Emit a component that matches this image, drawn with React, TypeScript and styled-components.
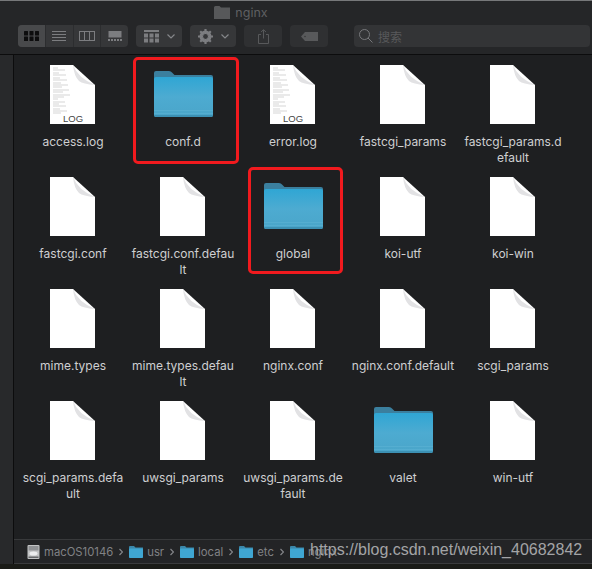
import React from "react";
import styled, { createGlobalStyle } from "styled-components";

const GlobalStyle = createGlobalStyle`
  html, body {
    margin: 0;
    padding: 0;
    background: #1e1f21;
  }
`;

type FileKind = "log" | "doc" | "folder";

const files: { name: string; kind: FileKind; mark?: "wide" | "narrow" }[] = [
  { name: "access.log", kind: "log" },
  { name: "conf.d", kind: "folder", mark: "wide" },
  { name: "error.log", kind: "log" },
  { name: "fastcgi_params", kind: "doc" },
  { name: "fastcgi_params.default", kind: "doc" },
  { name: "fastcgi.conf", kind: "doc" },
  { name: "fastcgi.conf.default", kind: "doc" },
  { name: "global", kind: "folder", mark: "narrow" },
  { name: "koi-utf", kind: "doc" },
  { name: "koi-win", kind: "doc" },
  { name: "mime.types", kind: "doc" },
  { name: "mime.types.default", kind: "doc" },
  { name: "nginx.conf", kind: "doc" },
  { name: "nginx.conf.default", kind: "doc" },
  { name: "scgi_params", kind: "doc" },
  { name: "scgi_params.default", kind: "doc" },
  { name: "uwsgi_params", kind: "doc" },
  { name: "uwsgi_params.default", kind: "doc" },
  { name: "valet", kind: "folder" },
  { name: "win-utf", kind: "doc" },
];

const FolderIcon = ({ id }: { id: string }) => (
  <svg width="60" height="48" viewBox="0 0 60 48">
    <defs>
      <linearGradient id={id} x1="0" y1="0" x2="0" y2="1">
        <stop offset="0" stopColor="#2fa6d4" />
        <stop offset="0.5" stopColor="#4dabd1" />
        <stop offset="1" stopColor="#4aa5c9" />
      </linearGradient>
    </defs>
    <path d="M1 3 Q1 1 3 1 H16 Q18 1 19 2.500 L21.500 5 H58 Q60 5 60 7 V14 H1 Z" fill="#3b7f9e" />
    <path d="M1 9 Q1 7 3 7 H58 Q60 7 60 9 V45 Q60 47 58 47 H3 Q1 47 1 45 Z" fill={`url(#${id})`} />
    <path d="M1 40 H60 V41 H1 Z M1 43 H60 V44 H1 Z" fill="#5cb2d3" opacity="0.6" />
    <path d="M1 45 Q1 47 3 47 H58 Q60 47 60 45 Z" fill="#3c90b3" />
  </svg>
);

const DocIcon = ({ log }: { log?: boolean }) => (
  <svg width="46" height="59" viewBox="0 0 46 59">
    <path d="M0 0 H23 L45 20 V59 H0 Z" fill="#ffffff" />
    <path d="M23 0 Q28 13 45 20 Q33 19 29 16 Q24 11 23 0 Z" fill="#e2e2e4" />
    {log && (
      <g stroke="#a9a9a9" strokeWidth="0.5">
        {[3, 5, 8, 10, 13, 15, 18, 20, 22, 25, 27, 30, 32, 34, 37, 39, 41, 44, 46, 48].map((y, i) => (
          <line key={y} x1="3" x2={8 + ((i * 7) % 13)} y1={y} y2={y} />
        ))}
      </g>
    )}
    {log && (
      <text x="13" y="57" fontFamily="Liberation Sans, sans-serif" fontSize="9.500" fill="#444">
        LOG
      </text>
    )}
  </svg>
);

const SmallFolder = () => (
  <svg width="14" height="12" viewBox="0 0 14 12">
    <path d="M0 1 Q0 0 1 0 H5 L6.500 1.500 H14 V4 H0 Z" fill="#3a87aa" />
    <rect x="0" y="2.500" width="14" height="9.500" rx="0.800" fill="#3fa6d2" />
  </svg>
);

const Chevron = () => (
  <svg width="4" height="8" viewBox="0 0 4 8">
    <path d="M0.500 1 L3.500 4 L0.500 7" fill="none" stroke="#85868a" strokeWidth="1.200" />
  </svg>
);

const DownChevron = () => (
  <svg width="8" height="5" viewBox="0 0 8 5">
    <path d="M0.500 0.500 L4 4 L7.500 0.500" fill="none" stroke="#85868a" strokeWidth="1.200" />
  </svg>
);

const DiskIcon = () => (
  <svg width="13" height="14" viewBox="0 0 13 14">
    <rect x="0.500" y="0" width="12" height="14" rx="1" fill="#c2c3c4" />
    <rect x="1.500" y="1" width="10" height="4.500" fill="#8f9194" />
    <ellipse cx="6.500" cy="8.500" rx="4" ry="2" fill="#ecedee" />
    <rect x="1.500" y="11.500" width="10" height="1.500" fill="#66686a" />
  </svg>
);

const App = () => {
  return (
    <Page>
      <GlobalStyle />
      <Toolbar>
        <TitleRow>
          <svg width="16" height="13" viewBox="0 0 16 13">
            <path d="M0 1.500 Q0 0 1.500 0 H5.500 L7 1.500 H16 V13 H0 Z" fill="#57585a" />
          </svg>
          <WindowTitle>nginx</WindowTitle>
        </TitleRow>
        <Controls>
          <Group>
            <Segment $active>
              <svg width="15" height="10" viewBox="0 0 15 10" fill="#0d0d0e">
                {[0, 5.5, 11].map((x) =>
                  [0, 5.5].map((y) => <rect key={`${x}-${y}`} x={x} y={y} width="4" height="4.500" rx="0.500" />),
                )}
              </svg>
            </Segment>
            <Segment>
              <svg width="14" height="10" viewBox="0 0 14 10" stroke="#7c7d80" strokeWidth="1">
                <line x1="0" x2="14" y1="0.500" y2="0.500" />
                <line x1="0" x2="14" y1="3.500" y2="3.500" />
                <line x1="0" x2="14" y1="6.500" y2="6.500" />
                <line x1="0" x2="14" y1="9.500" y2="9.500" />
              </svg>
            </Segment>
            <Segment>
              <svg width="16" height="10" viewBox="0 0 16 10" fill="none" stroke="#7c7d80" strokeWidth="1">
                <rect x="0.500" y="0.500" width="15" height="9" />
                <line x1="5.500" x2="5.500" y1="0" y2="10" />
                <line x1="10.500" x2="10.500" y1="0" y2="10" />
              </svg>
            </Segment>
            <Segment>
              <svg width="14" height="10" viewBox="0 0 14 10" fill="#7c7d80">
                <rect x="0.500" y="0" width="13" height="6.500" />
                {[0, 3, 6, 9, 12].map((x) => (
                  <rect key={x} x={x} y="8" width="2" height="2" />
                ))}
              </svg>
            </Segment>
          </Group>
          <Button $width={46}>
            <svg width="15" height="13" viewBox="0 0 15 13" fill="#7c7d80">
              <rect x="0" y="0" width="15" height="2" />
              {[0, 5.5, 11].map((x) =>
                [3.5, 8.5].map((y) => <rect key={`${x}-${y}`} x={x} y={y} width="4" height="4" />),
              )}
            </svg>
            <DownChevron />
          </Button>
          <Button $width={46}>
            <svg width="15" height="15" viewBox="0 0 15 15">
              <circle cx="7.500" cy="7.500" r="4.500" fill="none" stroke="#7c7d80" strokeWidth="3" />
              <path
                d="M7.500 0 V15 M0 7.500 H15 M2.200 2.200 L12.800 12.800 M12.800 2.200 L2.200 12.800"
                stroke="#7c7d80"
                strokeWidth="2.200"
              />
              <circle cx="7.500" cy="7.500" r="2.400" fill="#363739" />
            </svg>
            <DownChevron />
          </Button>
          <Button $width={38} $dim>
            <svg width="11" height="15" viewBox="0 0 11 15" fill="none" stroke="#58595b" strokeWidth="1">
              <path d="M3 5.500 H0.500 V14.500 H10.500 V5.500 H8 M5.500 9.500 V1 M3 3 L5.500 0.700 L8 3" />
            </svg>
          </Button>
          <Button $width={38} $dim>
            <svg width="17" height="9" viewBox="0 0 17 9">
              <path d="M4 0 H17 V9 H4 L0 4.500 Z" fill="#58595b" />
              <circle cx="4" cy="4.500" r="0.800" fill="#363739" />
            </svg>
          </Button>
          <SearchBox>
            <svg width="14" height="14" viewBox="0 0 14 14" fill="none" stroke="#77787b" strokeWidth="1">
              <circle cx="5.500" cy="5.500" r="5" />
              <line x1="9" y1="9" x2="13.500" y2="13.500" />
            </svg>
            <SearchHint>搜索</SearchHint>
          </SearchBox>
        </Controls>
      </Toolbar>

      <Body>
        <Sidebar />
        <Main>
          <FileGrid>
            {files.map((file) => (
              <Cell key={file.name}>
                <IconSlot>
                  {file.kind === "folder" ? (
                    <FolderIcon id={`grad-${file.name.replace(".", "")}`} />
                  ) : (
                    <DocIcon log={file.kind === "log"} />
                  )}
                </IconSlot>
                <Label>{file.name}</Label>
                {file.mark && <Highlight $mark={file.mark} />}
              </Cell>
            ))}
          </FileGrid>
          <PathBar>
            <Crumb>
              <DiskIcon />
              <span>macOS10146</span>
            </Crumb>
            <Chevron />
            <Crumb>
              <SmallFolder />
              <span>usr</span>
            </Crumb>
            <Chevron />
            <Crumb>
              <SmallFolder />
              <span>local</span>
            </Crumb>
            <Chevron />
            <Crumb>
              <SmallFolder />
              <span>etc</span>
            </Crumb>
            <Chevron />
            <Crumb>
              <SmallFolder />
              <span>nginx</span>
            </Crumb>
          </PathBar>
        </Main>
      </Body>
      <BottomEdge />
      <Watermark>https://blog.csdn.net/weixin_40682842</Watermark>
    </Page>
  );
};

export default App;

const Page = styled.div`
  position: relative;
  width: 592px;
  height: 569px;
  overflow: hidden;
  display: flex;
  flex-direction: column;
  background: #1e1f21;
  font-family: "Inter", "Liberation Sans", sans-serif;
`;

const Toolbar = styled.div`
  box-sizing: border-box;
  height: 55px;
  flex-shrink: 0;
  padding: 1px 2px 0 18px;
  background: #252628;
  border-top: 1px solid #77787a;
  border-bottom: 1px solid #0c0c0d;
`;

const TitleRow = styled.div`
  height: 20px;
  margin-bottom: 3px;
  display: flex;
  align-items: center;
  justify-content: center;
  gap: 5px;
  padding-right: 126px;
`;

const WindowTitle = styled.span`
  font-size: 12.5px;
  color: #5f6062;
`;

const Controls = styled.div`
  display: flex;
  gap: 8px;
`;

const Group = styled.div`
  display: flex;
  width: 110px;
  height: 22px;
  border-radius: 4px;
  overflow: hidden;
  background: #363739;
`;

const Segment = styled.div<{ $active?: boolean }>`
  flex: 1;
  display: flex;
  align-items: center;
  justify-content: center;
  background: ${(p) => (p.$active ? "#48494b" : "transparent")};
  & + & {
    border-left: 1px solid #2c2d2f;
  }
`;

const Button = styled.div<{ $width: number; $dim?: boolean }>`
  width: ${(p) => p.$width}px;
  height: 22px;
  border-radius: 4px;
  display: flex;
  align-items: center;
  justify-content: center;
  gap: 8px;
  background: ${(p) => (p.$dim ? "#2f3032" : "#363739")};
`;

const SearchBox = styled.div`
  flex: 1;
  height: 22px;
  margin-left: 18px;
  padding-left: 5px;
  border-radius: 4px;
  display: flex;
  align-items: center;
  gap: 5px;
  background: #333436;
`;

const SearchHint = styled.span`
  font-family: "Noto Sans CJK SC", sans-serif;
  font-size: 12px;
  color: #58595b;
`;

const Body = styled.div`
  flex: 1;
  display: flex;
  min-height: 0;
`;

const Sidebar = styled.div`
  width: 13px;
  flex-shrink: 0;
  background: #28292b;
  border-right: 1px solid #0c0c0d;
`;

const Main = styled.div`
  flex: 1;
  display: flex;
  flex-direction: column;
  min-width: 0;
`;

const FileGrid = styled.div`
  flex: 1;
  padding-left: 4px;
  display: grid;
  grid-template-columns: repeat(5, 110px);
  grid-auto-rows: 112px;
`;

const Cell = styled.div`
  position: relative;
  display: flex;
  flex-direction: column;
  align-items: center;
`;

const IconSlot = styled.div`
  height: 70px;
  padding-top: 8px;
  box-sizing: border-box;
  display: flex;
  align-items: center;
  justify-content: center;
`;

const Label = styled.div`
  width: 103.5px;
  margin-top: 9px;
  font-size: 12px;
  line-height: 16px;
  color: #cfcfd1;
  text-align: center;
  word-break: break-all;
`;

const Highlight = styled.div<{ $mark: "wide" | "narrow" }>`
  position: absolute;
  box-sizing: border-box;
  border: 3px solid #f11a1e;
  border-radius: 5px;
  top: ${(p) => (p.$mark === "wide" ? "2px" : "0")};
  left: ${(p) => (p.$mark === "wide" ? "5px" : "10px")};
  width: ${(p) => (p.$mark === "wide" ? "106px" : "95px")};
  height: 107px;
`;

const PathBar = styled.div`
  box-sizing: border-box;
  height: 25px;
  flex-shrink: 0;
  padding-left: 13px;
  display: flex;
  align-items: center;
  gap: 6px;
  background: #232426;
  border-top: 1px solid #38393b;
  border-bottom: 1px solid #3a3b3d;
`;

const Crumb = styled.div`
  display: flex;
  align-items: center;
  gap: 4px;
  font-size: 11.3px;
  color: #818285;
`;

const BottomEdge = styled.div`
  height: 5px;
  flex-shrink: 0;
  background: #1a1b17;
`;

const Watermark = styled.div`
  position: absolute;
  left: 310px;
  top: 541px;
  font-family: "Liberation Sans", sans-serif;
  font-size: 16px;
  line-height: 18px;
  color: #a3a4a6;
  white-space: nowrap;
`;
